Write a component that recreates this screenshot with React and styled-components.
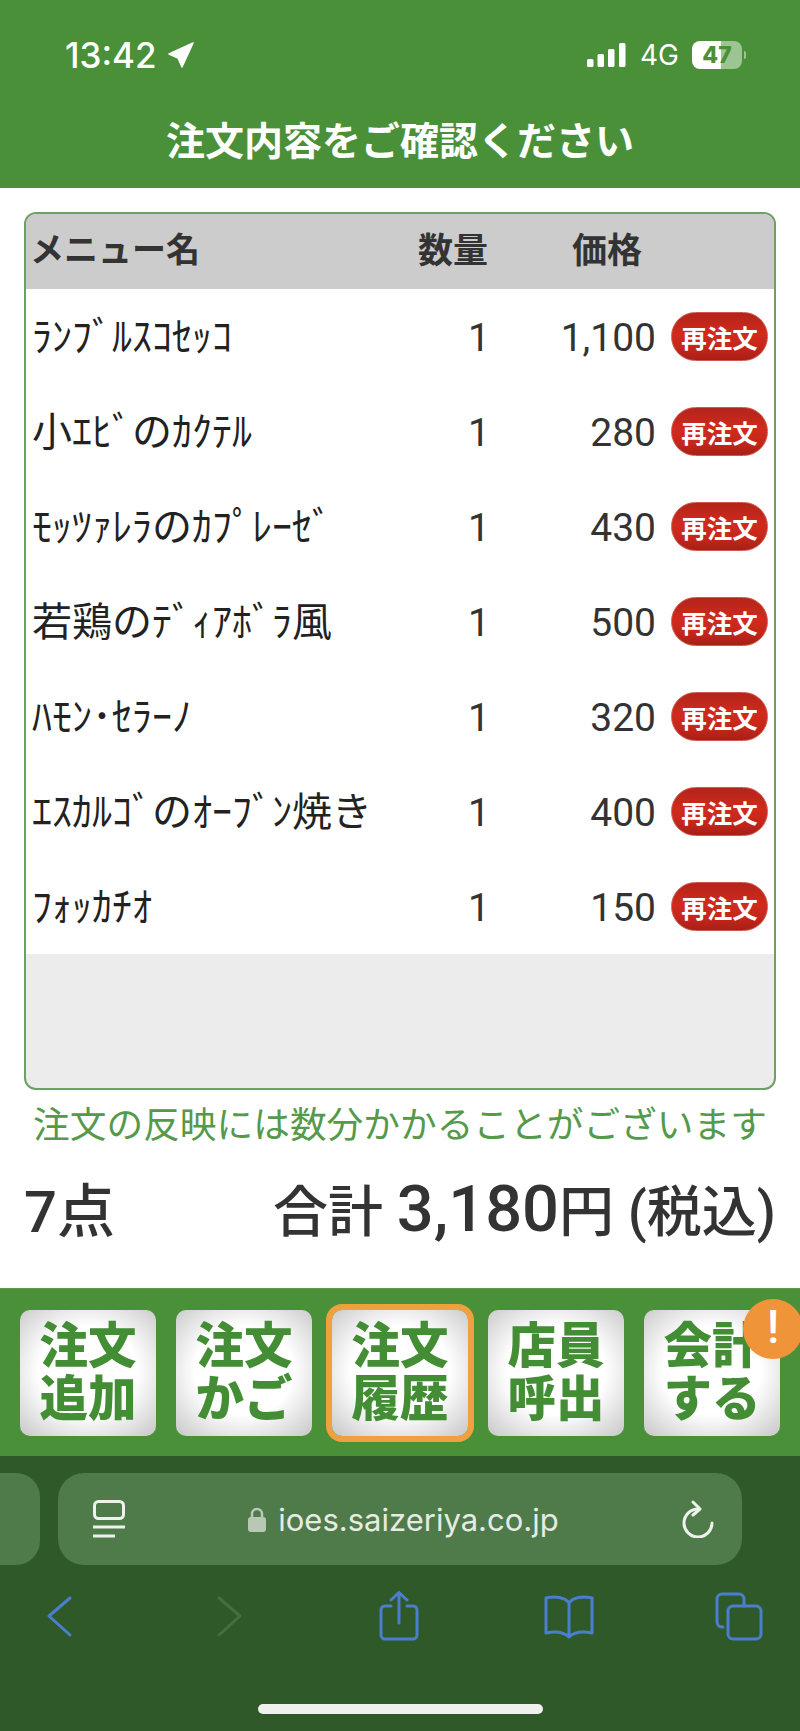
import React from 'react';
import styled, { createGlobalStyle } from 'styled-components';

const JP = `'Noto Sans CJK JP', sans-serif`;
const UI = `Roboto, 'Noto Sans CJK JP', sans-serif`;
const IOS = `Inter, 'Liberation Sans', sans-serif`;
const GREEN = '#4a9038';
const BLUE = '#4a7fd0';

const GlobalStyle = createGlobalStyle`
   html, body {
      margin: 0;
      padding: 0;
      background: #fff;
   }
`;

const Page = styled.div`
   width: 800px;
   height: 1731px;
   overflow: hidden;
   display: flex;
   flex-direction: column;
   background: #fff;
   font-family: ${UI};
`;

const Header = styled.header`
   height: 188px;
   background: ${GREEN};
   color: #fff;
   box-sizing: border-box;
   padding-top: 35px;
`;

const StatusRow = styled.div`
   height: 40px;
   padding: 0 58px 0 65px;
   display: flex;
   align-items: center;
   font-family: ${IOS};
`;

const Time = styled.span`
   font-size: 35px;
   font-weight: 500;
   line-height: 40px;
`;

const LocationIcon = styled.svg`
   width: 28px;
   height: 28px;
   margin-left: 10px;
   margin-right: auto;
`;

const SignalIcon = styled.svg`
   width: 39px;
   height: 24px;
`;

const Network = styled.span`
   margin: 0 13px 0 14px;
   font-size: 28px;
   font-weight: 400;
`;

const Battery = styled.div`
   position: relative;
   width: 50px;
   height: 28px;
   border-radius: 8px;
   background: linear-gradient(90deg, #fff 0 58%, #9cc592 58% 100%);
   color: ${GREEN};
   font-size: 23px;
   font-weight: 800;
   line-height: 28px;
   text-align: center;
   &::after {
      content: '';
      position: absolute;
      right: -4px;
      top: 10px;
      width: 2px;
      height: 8px;
      border-radius: 0 2px 2px 0;
      background: #9cc592;
   }
`;

const Title = styled.h1`
   margin: 33px 0 0;
   font-family: ${JP};
   font-size: 39px;
   font-weight: 700;
   line-height: 60px;
   text-align: center;
`;

const Main = styled.main`
   flex: 1;
   padding: 24px 24px 0;
`;

const OrderBox = styled.div`
   height: 878px;
   box-sizing: border-box;
   border: 2px solid #6fa063;
   border-radius: 12px;
   background: #ececec;
   overflow: hidden;
`;

const Columns = styled.div`
   display: grid;
   grid-template-columns: 1fr 73px 166px 112px;
   align-items: center;
   padding: 0 6px;
`;

const HeadRow = styled(Columns)`
   height: 75px;
   box-sizing: border-box;
   padding-left: 4px;
   padding-bottom: 8px;
   background: #ccc;
   color: #333;
   font-family: ${JP};
   font-size: 35px;
   font-weight: 700;
`;

const HeadName = styled.span`
   font-size: 34px;
`;

const HeadCell = styled.span`
   text-align: right;
   padding-right: ${(p) => p.$inset}px;
`;

const Row = styled(Columns)`
   height: 95px;
   background: #fff;
   color: #333;
`;

const ItemName = styled.span`
   font-family: ${JP};
   font-size: 40px;
   line-height: 50px;
   padding-bottom: 6px;
   color: #222;
   white-space: nowrap;
`;

const Num = styled.span`
   font-size: 39px;
   padding-top: 2px;
   text-align: right;
`;

const ReorderButton = styled.button`
   justify-self: end;
   width: 97px;
   height: 49px;
   padding: 0;
   border: 1px solid #d0584e;
   border-radius: 25px;
   background: linear-gradient(180deg, #b3241a 0%, #d02b1d 45%, #c4261a 75%, #a81f16 100%);
   color: #fff;
   font-family: ${JP};
   font-size: 25.5px;
   font-weight: 700;
   line-height: 45px;
`;

const Notice = styled.p`
   margin: 10px 0 0;
   font-family: ${JP};
   font-size: 36.7px;
   line-height: 44px;
   color: #55994a;
   text-align: center;
   white-space: nowrap;
`;

const Totals = styled.div`
   margin-top: 38px;
   box-sizing: border-box;
   display: flex;
   justify-content: space-between;
   align-items: center;
   height: 60px;
   padding-bottom: 10px;
   color: #333;
   font-size: 58px;
   font-weight: 500;
   white-space: nowrap;
`;

const TotalLabel = styled.span`
   font-size: 55px;
`;

const TotalAmount = styled.span`
   font-size: 65px;
`;

const Nav = styled.nav`
   height: 168px;
   box-sizing: border-box;
   padding: 21px 20px 0;
   background: ${GREEN};
   border-top: 1px solid #5d9a4d;
   display: grid;
   grid-template-columns: repeat(5, 136px);
   justify-content: space-between;
   align-items: start;
`;

const NavButton = styled.button`
   position: relative;
   height: 126px;
   padding: 0 0 9px;
   border: 0;
   border-radius: 10px;
   background: radial-gradient(ellipse 72% 70% at 50% 48%, #fff 50%, #c9c9c9 100%);
   box-shadow: ${(p) => (p.$active ? '0 0 0 6px #f0a03c' : 'none')};
   color: #438d34;
   font-family: ${JP};
   font-size: 48.5px;
   font-weight: 900;
   line-height: 53px;
`;

const Badge = styled.span`
   position: absolute;
   top: -11px;
   right: -23px;
   width: 60px;
   height: 60px;
   border-radius: 50%;
   background: #f0943a;
   color: #fff;
   font-family: ${UI};
   font-size: 46px;
   font-weight: 500;
   line-height: 56px;
   text-align: center;
`;

const Browser = styled.div`
   height: 275px;
   box-sizing: border-box;
   padding-top: 17px;
   background: #30592a;
`;

const TabStrip = styled.div`
   display: flex;
   gap: 18px;
   height: 92px;
`;

const PrevTab = styled.div`
   width: 40px;
   border-radius: 0 24px 24px 0;
   background: #4f7a4a;
`;

const UrlBar = styled.div`
   width: 684px;
   box-sizing: border-box;
   padding: 0 28px 0 35px;
   border-radius: 26px;
   background: #4f7a4a;
   display: flex;
   align-items: center;
   justify-content: space-between;
`;

const UrlText = styled.div`
   display: flex;
   align-items: center;
   gap: 12px;
   color: #e6ece4;
   font-family: ${IOS};
   font-size: 31px;
`;

const Toolbar = styled.div`
   margin-top: 26px;
   padding: 0 31px 0 29px;
   height: 50px;
   display: flex;
   justify-content: space-between;
`;

const ToolIcon = styled.svg`
   width: 60px;
   height: 50px;
   fill: none;
   stroke: ${(p) => (p.$muted ? '#476e42' : BLUE)};
   stroke-width: 3;
   stroke-linecap: round;
   stroke-linejoin: round;
`;

const HomeBar = styled.div`
   width: 285px;
   height: 10px;
   margin: 63px auto 0;
   border-radius: 5px;
   background: #f0f0ee;
`;

const ITEMS = [
   ['ﾗﾝﾌﾞﾙｽｺｾｯｺ', '1,100'],
   ['小ｴﾋﾞのｶｸﾃﾙ', '280'],
   ['ﾓｯﾂｧﾚﾗのｶﾌﾟﾚｰｾﾞ', '430'],
   ['若鶏のﾃﾞｨｱﾎﾞﾗ風', '500'],
   ['ﾊﾓﾝ･ｾﾗｰﾉ', '320'],
   ['ｴｽｶﾙｺﾞのｵｰﾌﾞﾝ焼き', '400'],
   ['ﾌｫｯｶﾁｵ', '150'],
];

const NAV = [['注文', '追加'], ['注文', 'かご'], ['注文', '履歴'], ['店員', '呼出'], ['会計', 'する']];

const App = () => (
   <Page>
      <GlobalStyle />
      <Header>
         <StatusRow>
            <Time>13:42</Time>
            <LocationIcon viewBox="0 0 28 28">
               <path d="M26 2 L2 13 L11 17 L15 26 Z" fill="#fff" stroke="#fff" strokeWidth="1.5" strokeLinejoin="round" />
            </LocationIcon>
            <SignalIcon viewBox="0 0 39 24">
               <rect x="0" y="16" width="6.5" height="8" rx="1.5" fill="#fff" />
               <rect x="10.5" y="11" width="6.5" height="13" rx="1.5" fill="#fff" />
               <rect x="21" y="6" width="6.5" height="18" rx="1.5" fill="#fff" />
               <rect x="32" y="0" width="6.5" height="24" rx="1.5" fill="#fff" />
            </SignalIcon>
            <Network>4G</Network>
            <Battery>47</Battery>
         </StatusRow>
         <Title>注文内容をご確認ください</Title>
      </Header>
      <Main>
         <OrderBox>
            <HeadRow>
               <HeadName>メニュー名</HeadName>
               <HeadCell $inset={2}>数量</HeadCell>
               <HeadCell $inset={14}>価格</HeadCell>
            </HeadRow>
            {ITEMS.map(([name, price]) => (
               <Row key={name}>
                  <ItemName>{name}</ItemName>
                  <Num>1</Num>
                  <Num>{price}</Num>
                  <ReorderButton>再注文</ReorderButton>
               </Row>
            ))}
         </OrderBox>
         <Notice>注文の反映には数分かかることがございます</Notice>
         <Totals>
            <span>7点</span>
            <TotalLabel>
               合計 <TotalAmount>3,180</TotalAmount>円 (税込)
            </TotalLabel>
         </Totals>
      </Main>
      <Nav>
         {NAV.map(([a, b], i) => (
            <NavButton key={a + b} $active={i === 2}>
               {a}
               <br />
               {b}
               {i === 4 && <Badge>!</Badge>}
            </NavButton>
         ))}
      </Nav>
      <Browser>
         <TabStrip>
            <PrevTab />
            <UrlBar>
               <svg width="32" height="38" viewBox="0 0 32 38" fill="none" stroke="#eef2ec" strokeWidth="3">
                  <rect x="1.5" y="1.5" width="29" height="17" rx="4" />
                  <path d="M0 27 H32 M0 36 H22" />
               </svg>
               <UrlText>
                  <svg width="18" height="25" viewBox="0 0 18 25">
                     <path d="M4 11 V7 a5 5 0 0 1 10 0 V11" fill="none" stroke="#b8c8b4" strokeWidth="2.5" />
                     <rect x="0" y="10" width="18" height="15" rx="3" fill="#b8c8b4" />
                  </svg>
                  <span>ioes.saizeriya.co.jp</span>
               </UrlText>
               <svg width="32" height="38" viewBox="0 0 32 38" fill="none" stroke="#eef2ec" strokeWidth="3" strokeLinecap="round" strokeLinejoin="round">
                  <path d="M16 9 A14 14 0 1 0 30 23" />
                  <path d="M11 2 L18 9 L11 15" />
               </svg>
            </UrlBar>
         </TabStrip>
         <Toolbar>
            <ToolIcon viewBox="0 0 60 50">
               <path d="M41 7 L20 25 L41 44" />
            </ToolIcon>
            <ToolIcon viewBox="0 0 60 50" $muted>
               <path d="M20 7 L41 25 L20 44" />
            </ToolIcon>
            <ToolIcon viewBox="0 0 60 50">
               <path d="M22 15 H16 a4 4 0 0 0 -4 4 V44 a4 4 0 0 0 4 4 H44 a4 4 0 0 0 4 -4 V19 a4 4 0 0 0 -4 -4 H38" />
               <path d="M30 32 V2 M22 9 L30 1.5 L38 9" />
            </ToolIcon>
            <ToolIcon viewBox="0 0 60 50">
               <path d="M30 12 C26 6 16 5 7 7 V42 C16 40 25 41 30 46 C35 41 44 40 53 42 V7 C44 5 34 6 30 12 Z M30 12 V46" />
            </ToolIcon>
            <ToolIcon viewBox="0 0 60 50">
               <path d="M14 36 H13 a5 5 0 0 1 -5 -5 V8 a5 5 0 0 1 5 -5 H30 a5 5 0 0 1 5 5 V15" />
               <rect x="19" y="15" width="33" height="33" rx="5" />
            </ToolIcon>
         </Toolbar>
         <HomeBar />
      </Browser>
   </Page>
);

export default App;
